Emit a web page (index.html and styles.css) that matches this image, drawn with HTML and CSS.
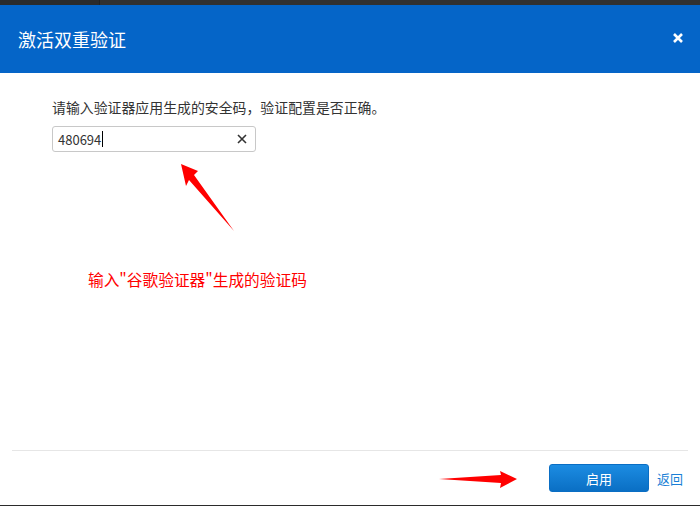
FILE: index.html
```html
<!DOCTYPE html>
<html lang="zh-CN">
<head>
    <meta charset="UTF-8">
    <title>激活双重验证</title>
    <link rel="stylesheet" href="styles.css">
</head>
<body>
    <div class="page">
        <div class="topbar"><span class="tab"></span></div>

        <div class="modal">
            <div class="modal-header">
                <h2>激活双重验证</h2>
                <span class="close">
                    <svg width="10" height="10" viewBox="0 0 10 10"><path d="M1 1L9 9M9 1L1 9" stroke="#fff" stroke-width="2.6"/></svg>
                </span>
            </div>

            <div class="modal-body">
                <p class="hint">请输入验证器应用生成的安全码，验证配置是否正确。</p>
                <div class="code-input">
                    <span class="value">480694</span><span class="caret"></span>
                    <span class="clear">
                        <svg width="10" height="10" viewBox="0 0 10 10"><path d="M1 1L9 9M9 1L1 9" stroke="#333" stroke-width="1.6"/></svg>
                    </span>
                </div>
                <p class="note">输入"谷歌验证器"生成的验证码</p>
            </div>

            <div class="modal-footer">
                <button class="btn-primary">启用</button>
                <a class="back" href="#">返回</a>
            </div>
        </div>

        <div class="bottombar"></div>

        <!-- annotation arrows -->
        <svg class="arrows" width="700" height="506" viewBox="0 0 700 506">
            <polygon points="181,164 198,171 194,175 234,231 189,180 186,186" fill="#ff0000"/>
            <polygon points="439,479 501,475 500,471 517,479 500,488 501,483" fill="#ff0000"/>
        </svg>
    </div>
</body>
</html>
```

FILE: styles.css
```css
body {
    margin: 0;
    padding: 0;
    background: #fff;
    font-family: "Noto Sans CJK SC", "Noto Sans", sans-serif;
    color: #333;
}

.page {
    position: relative;
    width: 700px;
    height: 506px;
    overflow: hidden;
}

.topbar {
    height: 5px;
    background: #313131;
}

.topbar .tab {
    display: block;
    width: 99px;
    height: 5px;
    background: #2b2b2b;
    border-right: 1px solid #222;
}

.modal-header {
    height: 68px;
    background: #0565c8;
    display: flex;
    align-items: center;
    justify-content: space-between;
    padding: 0 17px 0 18px;
}

.modal-header h2 {
    margin: 0;
    font-size: 18px;
    font-weight: normal;
    color: #fff;
    line-height: 24px;
}

.close {
    display: flex;
    margin-top: -3px;
}

.modal-body {
    height: 377px;
    padding: 0 0 0 52px;
    box-sizing: border-box;
    overflow: hidden;
}

.hint {
    margin: 24px 0 9px;
    font-size: 13.9px;
    line-height: 20px;
}

.code-input {
    width: 204px;
    height: 26px;
    box-sizing: border-box;
    border: 1px solid #c8c8c8;
    border-radius: 3px;
    display: flex;
    align-items: center;
    padding: 0 8px 0 5px;
    font-size: 13px;
}

.code-input .value {
    color: #333;
}

.caret {
    width: 1px;
    height: 16px;
    background: #000;
    margin-left: 1px;
}

.clear {
    display: flex;
    margin-left: auto;
}

.note {
    margin: 117px 0 0 36px;
    font-size: 15.7px;
    line-height: 22px;
    color: #ff0000;
}

.modal-footer {
    margin: 0 12px;
    height: 55px;
    box-sizing: border-box;
    border-top: 1px solid #e6e6e6;
    display: flex;
    justify-content: flex-end;
    align-items: center;
    gap: 8px;
    padding: 0 5px 0 0;
}

.btn-primary {
    width: 100px;
    height: 28px;
    border: 1px solid #0a6ec4;
    border-radius: 3px;
    background: linear-gradient(#1c8ce2, #0a6fc4);
    color: #fff;
    font-family: inherit;
    font-size: 13px;
    padding: 0;
}

.back {
    color: #1a7fd6;
    font-size: 13px;
    text-decoration: none;
}

.bottombar {
    height: 1px;
    background: #2b2b2b;
}

.arrows {
    position: absolute;
    left: 0;
    top: 0;
    pointer-events: none;
}
```
